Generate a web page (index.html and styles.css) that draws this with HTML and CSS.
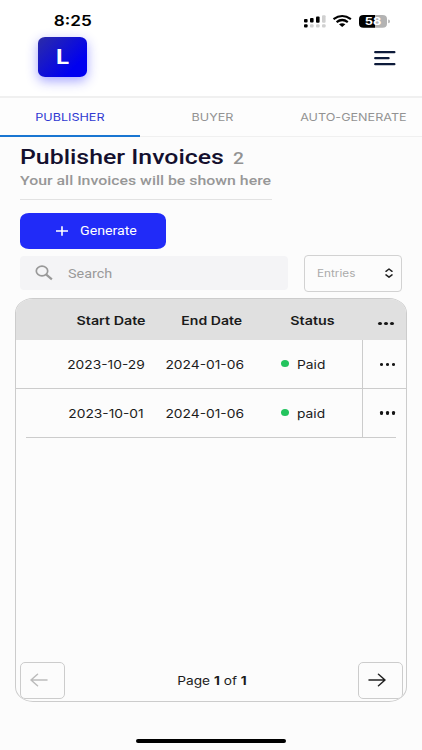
FILE: index.html
```html
<!DOCTYPE html>
<html lang="en">
<head>
<meta charset="utf-8">
<meta name="viewport" content="width=device-width, initial-scale=1">
<title>Publisher Invoices</title>
<link rel="stylesheet" href="styles.css">
</head>
<body>
<header class="top">
  <div class="status">
    <span class="wide clock">8:25</span>
    <svg class="signals" width="90" height="16" viewBox="0 0 90 16">
      <g fill="#000"><rect x="1" y="6" width="3.6" height="3.6" rx="1"/><rect x="7" y="5" width="3.6" height="4.6" rx="1"/><rect x="13" y="3.5" width="3.6" height="6.3" rx="1"/><rect x="1" y="11.2" width="3.6" height="3.4" rx="1"/></g>
      <g fill="#d0d0d0"><rect x="19" y="2.2" width="3.6" height="7.6" rx="1"/><rect x="7" y="11.2" width="3.6" height="3.4" rx="1"/><rect x="13" y="11.2" width="3.6" height="3.4" rx="1"/><rect x="19" y="11.2" width="3.6" height="3.4" rx="1"/></g>
      <g fill="none" stroke="#000" stroke-width="2.2"><path d="M30.5 6.1Q39.2-.1 47.9 6.1"/><path d="M33.6 9.1Q39.2 4.9 44.8 9.1"/></g>
      <path d="M36 11.3Q39.2 9 42.4 11.3L39.2 14.1Z"/>
      <path d="M60.5 2H72V14.8H60.5Q56 14.8 56 10.8V6Q56 2 60.5 2Z"/>
      <path d="M72 2H79.5Q84 2 84 6V10.8Q84 14.8 79.5 14.8H72Z" fill="#b3b3b3"/>
      <path d="M85.2 6.5Q87 6.8 87 8.4T85.2 10.3Z" fill="#b3b3b3"/>
      <text x="70" y="12.4" text-anchor="middle" fill="#fff" font-family="Inter, sans-serif" font-weight="700" font-size="11" textLength="16.5" lengthAdjust="spacingAndGlyphs">58</text>
    </svg>
  </div>
  <div class="bar">
    <div class="logo"><span class="wide">L</span></div>
    <svg class="menu" width="22" height="16" viewBox="0 0 22 16" fill="none" stroke="#0d1b3a" stroke-width="2.2" stroke-linecap="round"><path d="M1.2 2.2H20.4M1.2 8.2H14.6M1.2 14.2H20.4"/></svg>
  </div>
</header>
<nav class="tabs">
  <a class="tab active"><span class="wide">PUBLISHER</span></a>
  <a class="tab"><span class="wide">BUYER</span></a>
  <a class="tab"><span class="wide">AUTO-GENERATE</span></a>
</nav>
<main>
  <section class="intro">
    <h1><span class="wide start title">Publisher Invoices</span><span class="wide start count">2</span></h1>
    <p><span class="wide start">Your all Invoices will be shown here</span></p>
  </section>
  <button class="generate">
    <svg width="14" height="12" viewBox="0 0 14 12" stroke="#fff" stroke-width="1.6"><path d="M1 6H13M7 1.2V10.8"/></svg>
    <span class="wide start">Generate</span>
  </button>
  <div class="filters">
    <div class="search">
      <svg width="18" height="16" viewBox="0 0 18 16" fill="none" stroke="#999" stroke-width="1.7"><ellipse cx="7" cy="6" rx="5.7" ry="4.8"/><path d="M11 9.4L16.9 14.3" stroke-width="2.2"/></svg>
      <span class="wide start">Search</span>
    </div>
    <div class="select">
      <span class="wide start">Entries</span>
      <svg width="8" height="10" viewBox="0 0 8 10" fill="none" stroke="#222" stroke-width="1.5" stroke-linecap="round" stroke-linejoin="round"><path d="M1 3.3L4 1L7 3.3M1 6.9L4 9.2L7 6.9"/></svg>
    </div>
  </div>
  <section class="table">
    <div class="row head">
      <span class="wide">Start Date</span><span class="wide">End Date</span><span class="wide">Status</span>
      <span class="more"><i></i><i></i><i></i></span>
    </div>
    <div class="row">
      <span class="wide">2023-10-29</span><span class="wide">2024-01-06</span>
      <span class="state"><i class="dot"></i><span class="wide start">Paid</span></span>
      <span class="more"><i></i><i></i><i></i></span>
    </div>
    <div class="row last">
      <span class="wide">2023-10-01</span><span class="wide">2024-01-06</span>
      <span class="state"><i class="dot"></i><span class="wide start">paid</span></span>
      <span class="more"><i></i><i></i><i></i></span>
    </div>
    <div class="rule"></div>
    <footer class="pager">
      <button class="page"><svg width="18" height="14" viewBox="0 0 18 14" fill="none" stroke="#bcbcbc" stroke-width="1.5" stroke-linecap="round" stroke-linejoin="round"><path d="M17 7H1M7.5 1.3L1 7L7.5 12.7"/></svg></button>
      <span class="wide pages">Page <b>1</b> of <b>1</b></span>
      <button class="page"><svg width="18" height="14" viewBox="0 0 18 14" fill="none" stroke="#222" stroke-width="1.5" stroke-linecap="round" stroke-linejoin="round"><path d="M1 7H17M10.5 1.3L17 7L10.5 12.7"/></svg></button>
    </footer>
  </section>
</main>
<div class="home"></div>
</body>
</html>
```
FILE: styles.css
```css
* { box-sizing: border-box; }
body {
  margin: 0;
  height: 750px;
  overflow: hidden;
  display: flex;
  flex-direction: column;
  background: #fcfcfc;
  color: #1b1b1b;
  font-family: Inter, "Liberation Sans", sans-serif;
  font-size: 12px;
}
button { font: inherit; padding: 0; }

/* Widened lettering used throughout the interface */
.wide {
  display: inline-block;
  white-space: nowrap;
  transform: scaleX(1.2);
}
.start { transform-origin: left center; }

.top { height: 98px; background: #fff; border-bottom: 2px solid #f0f0f0; }
.status {
  display: flex;
  justify-content: space-between;
  align-items: center;
  height: 36px;
  padding: 6px 29px 0 57px;
}
.clock { margin-top: -1px; color: #000; font-size: 14.3px; font-weight: 600; }
.signals { margin-top: -1px; }
.bar {
  display: flex;
  justify-content: space-between;
  align-items: flex-start;
  padding: 1px 26px 0 38px;
}
.logo {
  display: flex;
  align-items: center;
  justify-content: center;
  width: 48.5px;
  height: 40px;
  border-radius: 7px / 6px;
  background: linear-gradient(135deg, #2c2ca8, #0000f0 75%);
  box-shadow: 0 4px 12px rgba(40, 40, 255, .42);
  color: #fff;
  font: 700 20px/40px Roboto, sans-serif;
}
.menu { margin-top: 13px; }

.tabs {
  display: grid;
  grid-template-columns: 140px 144px 138px;
  height: 38.5px;
  border-bottom: 1px solid #f0f0f0;
  background: #fdfdfd;
}
.tab {
  display: flex;
  align-items: center;
  justify-content: center;
  height: 38.5px;
  color: #929292;
  font-size: 10.5px;
}
.active { color: #3039d2; border-bottom: 2px solid #1976d2; padding-top: 2px; }

main { padding: 0 15px; }
.intro {
  width: 252px;
  height: 63px;
  margin-left: 5px;
  border-bottom: 1px solid #e2e2e2;
}
h1 {
  display: flex;
  align-items: baseline;
  margin: 0;
  padding-top: 8px;
  font: 500 20.5px/24px Roboto, sans-serif;
  color: #14102e;
}
.title { width: 212.5px; transform: scaleX(1.213); }
.count { color: #929292; font-size: 16px; font-weight: 500; }
.intro p {
  margin: 2px 0 0;
  font: 500 13px/16px Roboto, sans-serif;
  color: #979797;
}
.intro p .wide { transform: scaleX(1.22); }

.generate {
  display: flex;
  align-items: center;
  gap: 11px;
  width: 146px;
  height: 35.5px;
  margin: 13.5px 0 0 5px;
  padding-left: 35px;
  border: 0;
  border-radius: 9px / 7px;
  background: #212bf8;
  color: #fff;
  font: 400 12px Roboto, sans-serif;
}
.generate .wide { padding-top: 1px; transform: scaleX(1.18); }

.filters { display: flex; align-items: center; gap: 16px; margin: 6px 0 0 5px; }
.search {
  display: flex;
  align-items: center;
  gap: 15px;
  width: 267.5px;
  height: 34px;
  padding-left: 15px;
  border-radius: 4px;
  background: #f4f4f6;
  color: #9a9a9a;
  font: 400 12.2px Roboto, sans-serif;
}
.search .wide { padding-top: 1px; transform: scaleX(1.18); }
.select {
  display: flex;
  align-items: center;
  justify-content: space-between;
  width: 98px;
  height: 37px;
  padding: 0 8px 0 12px;
  border: 1px solid #d2d2d2;
  border-radius: 4px;
  color: #ababab;
  font-size: 9.8px;
}

.table {
  display: flex;
  flex-direction: column;
  width: 392px;
  height: 404.5px;
  margin-top: 6px;
  border: 1px solid #ccc;
  border-radius: 18px / 15px;
  overflow: hidden;
}
.row {
  display: grid;
  grid-template-columns: 140px 110px 96px 44px;
  align-items: center;
  height: 48.5px;
  border-bottom: 1px solid #ccc;
  font-size: 11.5px;
}
.row > .wide, .state .wide { padding-top: 2px; }
.row > :first-child { padding-left: 40px; transform-origin: 90px center; text-align: center; }
.row > :nth-child(2) { justify-self: center; margin-right: 13px; }
.row > :nth-child(3) { justify-self: start; margin-left: 15px; }
.row.last { height: 48px; border-bottom: 0; }
.head {
  height: 41.5px;
  border-bottom: 0;
  background: #e0e0e0;
  font-size: 11.9px;
  font-weight: 600;
}
.head > :first-child { padding-left: 50px; transform-origin: 95px center; }
.head > :nth-child(2) { margin-right: 0; transform: translateX(1px) scaleX(1.18); }
.head > :nth-child(3) { margin-left: 27.5px; }
.state { display: flex; align-items: center; gap: 8px; }
.dot { width: 8px; height: 7px; border-radius: 50%; background: #23c45e; }
.more {
  display: flex;
  align-items: center;
  justify-content: center;
  gap: 2.2px;
  height: 100%;
  padding: 1px 0 0 6px;
  border-left: 1px solid #ccc;
}
.more i { width: 3.8px; height: 3.2px; border-radius: 50%; background: #161616; }
.head .more { border: 0; padding: 8px 0 0 4px; }
.rule { height: 1px; margin: 0 10px; background: #ccc; }

.pager {
  display: flex;
  align-items: center;
  justify-content: space-between;
  margin-top: auto;
  padding: 0 3px 2.5px 4px;
  font-size: 11.4px;
}
.pages { padding: 1px 0 0 1px; }
.page {
  display: flex;
  align-items: center;
  justify-content: center;
  width: 45px;
  height: 37px;
  padding-right: 7px;
  border: 1px solid #ccc;
  border-radius: 5px;
  background: none;
}

.home {
  width: 150px;
  height: 4px;
  margin: auto auto 7px 136px;
  border-radius: 2px;
  background: #000;
}
```
